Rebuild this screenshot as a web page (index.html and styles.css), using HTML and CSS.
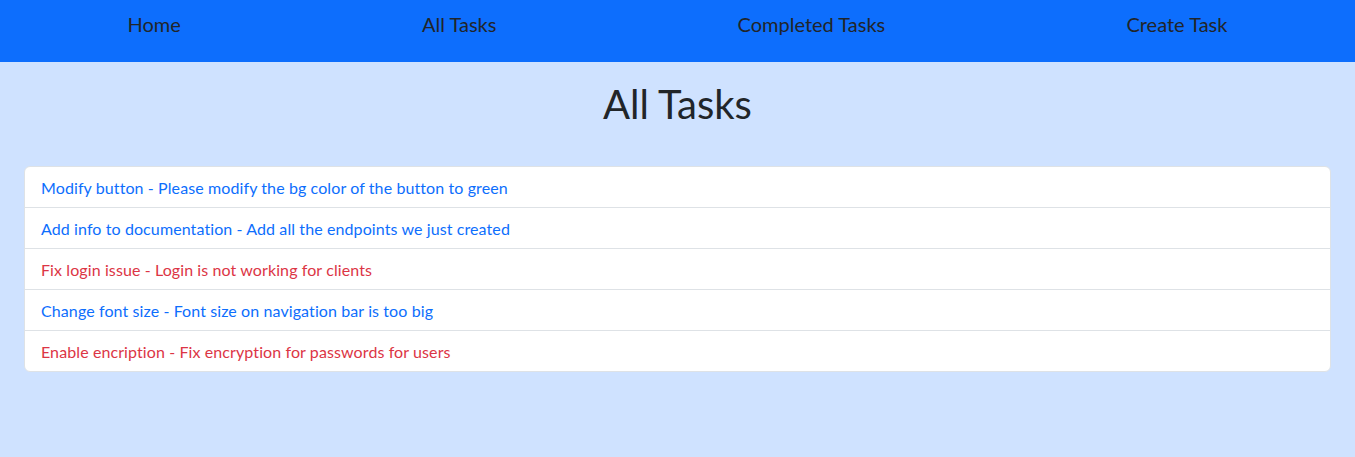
FILE: index.html
```html
<!DOCTYPE html>
<html lang="en">
<head>
<meta charset="utf-8">
<title>All Tasks</title>
<link rel="stylesheet" href="styles.css">
</head>
<body>
<nav class="navbar">
  <a class="nav-link" href="#">Home</a>
  <a class="nav-link" href="#">All Tasks</a>
  <a class="nav-link" href="#">Completed Tasks</a>
  <a class="nav-link" href="#">Create Task</a>
</nav>
<main class="content">
  <h1 class="title">All Tasks</h1>
  <ul class="task-list">
    <li class="task-item task-open">Modify button - Please modify the bg color of the button to green</li>
    <li class="task-item task-open">Add info to documentation - Add all the endpoints we just created</li>
    <li class="task-item task-urgent">Fix login issue - Login is not working for clients</li>
    <li class="task-item task-open">Change font size - Font size on navigation bar is too big</li>
    <li class="task-item task-urgent">Enable encription - Fix encryption for passwords for users</li>
  </ul>
</main>
</body>
</html>
```

FILE: styles.css
```css
* { box-sizing: border-box; }
html, body { margin: 0; padding: 0; }
body {
  background: #cfe2ff;
  color: #212529;
  font-family: "Lato", "Open Sans", sans-serif;
  font-size: 16px;
  line-height: 1.5;
  min-height: 457px;
}
.navbar {
  background: #0d6efd;
  height: 62px;
  display: flex;
  justify-content: space-around;
  align-items: flex-start;
  padding: 0 7px;
}
.nav-link {
  color: #212529;
  text-decoration: none;
  font-size: 20px;
  line-height: 30px;
  padding-top: 9px;
}
.content { padding: 0 24px; }
.title {
  text-align: center;
  font-size: 40px;
  font-weight: 400;
  line-height: 48px;
  margin: 18px 0 0;
}
.task-list {
  list-style: none;
  margin: 38px 0 0;
  padding: 0;
  background: #fff;
  border: 1px solid #dee2e6;
  border-radius: 6px;
}
.task-item {
  padding: 9px 16px 7px;
  line-height: 24px;
  font-size: 16px;
  letter-spacing: 0.1px;
  border-top: 1px solid #dee2e6;
}
.task-item:first-child { border-top: 0; }
.task-open { color: #0d6efd; }
.task-urgent { color: #dc3545; }
```
